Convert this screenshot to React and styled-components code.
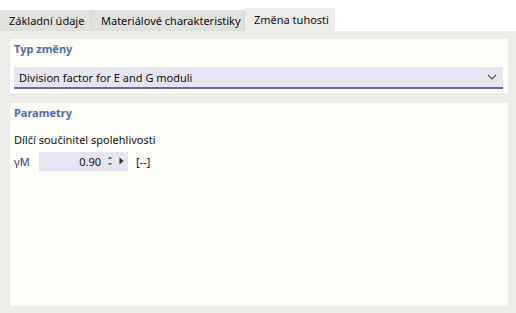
import React from 'react';
import styled, { createGlobalStyle } from 'styled-components';

const GlobalStyle = createGlobalStyle`
    html, body {
        margin: 0;
        padding: 0;
        background: #ffffff;
    }
    body {
        font-family: "Noto Sans", "Liberation Sans", sans-serif;
        font-size: 11px;
        color: #111111;
    }
`;

const Page = styled.div`
    width: 516px;
    height: 313px;
    display: flex;
    flex-direction: column;
    overflow: hidden;
`;

const TabBar = styled.div`
    display: flex;
    align-items: flex-end;
    height: 31px;
    background: #ffffff;
`;

const Tab = styled.div`
    height: ${(p) => (p.$active ? '23px' : '21px')};
    width: ${(p) => p.$w}px;
    box-sizing: border-box;
    padding-left: 9px;
    display: flex;
    align-items: center;
    background: ${(p) => (p.$active ? '#ecece8' : '#e0e0dc')};
    border-right: ${(p) => (p.$active ? 'none' : '1px solid #d4d4d0')};
    white-space: nowrap;
`;

const Body = styled.div`
    flex: 1;
    background: #ecece8;
    padding: 8px 8px 7px 10px;
    display: flex;
    flex-direction: column;
    gap: 10px;
`;

const Panel = styled.div`
    background: #fdfdf9;
    padding: 2px 5px 4px 4px;
    display: flex;
    flex-direction: column;
    flex: ${(p) => (p.$grow ? 1 : 'none')};
`;

const PanelTitle = styled.div`
    color: #4b6ea9;
    font-weight: bold;
    font-size: 11px;
    height: 16px;
    line-height: 16px;
`;

const Select = styled.div`
    margin-top: 10px;
    height: 20px;
    background: #e6e4f0;
    border-bottom: 2px solid #6e64a8;
    display: flex;
    align-items: center;
    justify-content: space-between;
    padding: 0 6px 0 5px;
`;

const Label = styled.div`
    margin-top: 10px;
    height: 18px;
    line-height: 18px;
`;

const Row = styled.div`
    display: flex;
    align-items: center;
    height: 20px;
    margin-top: 2px;
`;

const Symbol = styled.div`
    width: 25px;
    color: #2c3a8f;
    font-size: 11px;
`;

const Input = styled.div`
    width: 89px;
    height: 19px;
    background: #e6e4f0;
    display: flex;
    align-items: center;
    justify-content: flex-end;
    padding-right: 4px;
    box-sizing: border-box;
    gap: 6px;
`;

const Unit = styled.div`
    margin-left: 8px;
`;

const Chevron = () => (
    <svg width="10" height="6" viewBox="0 0 10 6">
        <path d="M1 1 L5 5 L9 1" fill="none" stroke="#555" strokeWidth="1.2" />
    </svg>
);

const Spinner = () => (
    <svg width="6" height="12" viewBox="0 0 6 12">
        <path d="M0.5 4 L3 1.5 L5.5 4 Z" fill="#777" />
        <path d="M0.5 8 L3 10.5 L5.5 8 Z" fill="#777" />
    </svg>
);

const Arrow = () => (
    <svg width="5" height="8" viewBox="0 0 5 8">
        <path d="M0.5 0.5 L4.5 4 L0.5 7.5 Z" fill="#333" />
    </svg>
);

const App = () => {
    return (
        <Page>
            <GlobalStyle />
            <TabBar>
                <Tab $w={92}>Základní údaje</Tab>
                <Tab $w={153}>Materiálové charakteristiky</Tab>
                <Tab $w={90} $active>Změna tuhosti</Tab>
            </TabBar>
            <Body>
                <Panel>
                    <PanelTitle>Typ změny</PanelTitle>
                    <Select>
                        <span>Division factor for E and G moduli</span>
                        <Chevron />
                    </Select>
                </Panel>
                <Panel $grow>
                    <PanelTitle>Parametry</PanelTitle>
                    <Label>Dílčí součinitel spolehlivosti</Label>
                    <Row>
                        <Symbol>γM</Symbol>
                        <Input>
                            <span>0.90</span>
                            <Spinner />
                            <Arrow />
                        </Input>
                        <Unit>[--]</Unit>
                    </Row>
                </Panel>
            </Body>
        </Page>
    );
};

export default App;
